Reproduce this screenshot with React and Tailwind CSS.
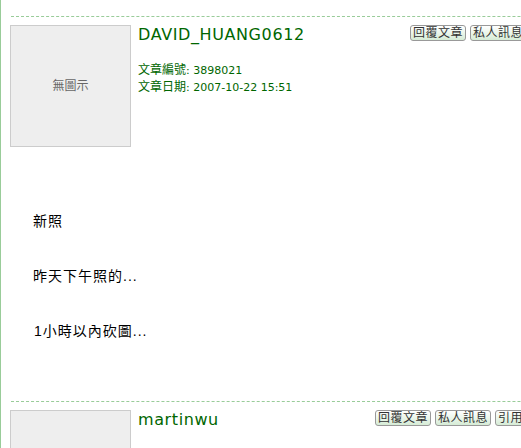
import React from "react";

const CJK = "font-['Liberation_Sans','Noto_Sans_CJK_TC',sans-serif]";
const VER = "font-['DejaVu_Sans','Noto_Sans_CJK_TC',sans-serif]";

function Btn({ children }) {
  return (
    <span
      className={`shrink-0 inline-flex items-center justify-center h-[16px] px-[2px] border border-[#999] rounded-[3px] bg-gradient-to-b from-white to-[#d6ecd6] text-[12px] leading-none text-[#333] tracking-[0.5px] ${CJK}`}
    >
      {children}
    </span>
  );
}

function Header({ name, colW, buttons, info }) {
  return (
    <div className="flex items-start pl-[9px]">
      <div className="shrink-0 w-[121px] h-[122px] border border-[#cccccc] bg-[#eeeeee] flex items-center justify-center">
        <span className={`text-[12px] text-[#666] ${CJK}`}>無圖示</span>
      </div>
      <div className={`shrink-0 ml-[7px] ${colW}`}>
        <div className={`text-[16px] leading-[20px] text-[#006600] tracking-[0.6px] ${VER}`}>{name}</div>
        {info && (
          <div className={`mt-[17px] text-[11px] leading-[17px] text-[#006600] ${VER}`}>
            <div>
              <span className={`text-[12px] ${CJK}`}>文章編號</span>: 3898021
            </div>
            <div>
              <span className={`text-[12px] ${CJK}`}>文章日期</span>: 2007-10-22 15:51
            </div>
          </div>
        )}
      </div>
      <div className="flex gap-[4px]">
        {buttons.map((b) => (
          <Btn key={b}>{b}</Btn>
        ))}
      </div>
    </div>
  );
}

export default function App() {
  return (
    <div className="w-[521px] h-[448px] overflow-hidden bg-white border-l border-[#99cc99] relative">
      <div className="w-[700px]">
        <div className="pt-[16px]">
          <div className="ml-[10px] border-t border-dashed border-[#99cc99]" />
          <div className="pt-[8px]">
            <Header
              name="DAVID_HUANG0612"
              colW="w-[272px]"
              info
              buttons={["回覆文章", "私人訊息", "引用文章", "檢舉"]}
            />
          </div>
          <div className={`pl-[32px] pt-[65px] text-[14px] leading-[18px] tracking-[1px] text-black ${CJK}`}>
            <p>新照</p>
            <p className="mt-[37px]">昨天下午照的...</p>
            <p className="mt-[37px] pl-[1px]">1小時以內砍圖...</p>
          </div>
        </div>
        <div className="pt-[61px]">
          <div className="ml-[10px] border-t border-dashed border-[#99cc99]" />
          <div className="pt-[8px]">
            <Header
              name="martinwu"
              colW="w-[237px]"
              buttons={["回覆文章", "私人訊息", "引用文章", "檢舉"]}
            />
          </div>
        </div>
      </div>
    </div>
  );
}
